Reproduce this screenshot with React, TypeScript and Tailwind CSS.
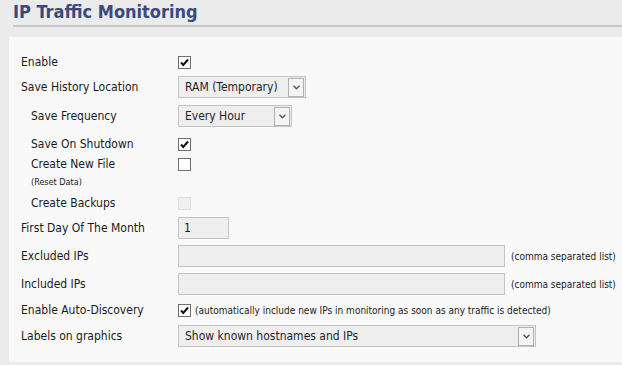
import { ReactNode } from 'react';

const font = { fontFamily: '"DejaVu Sans Condensed", "DejaVu Sans", sans-serif' };

function Check({ checked, disabled }: { checked?: boolean; disabled?: boolean }) {
  return (
    <span
      className={
        disabled
          ? 'flex h-[13px] w-[13px] shrink-0 items-center justify-center border border-[#dcdcdc] bg-[#f0f0f0]'
          : 'flex h-[13px] w-[13px] shrink-0 items-center justify-center border border-[#707070] bg-white'
      }
    >
      {checked && (
        <svg width="9" height="9" viewBox="0 0 9 9">
          <path d="M1 4.5 L3.3 7 L8 1.5" fill="none" stroke="#111" strokeWidth="2" />
        </svg>
      )}
    </span>
  );
}

function Select({ value, width }: { value: string; width: string }) {
  return (
    <div
      className={`flex h-[22px] items-center justify-between border border-[#c4c4c4] bg-[#eeeeee] pl-[6px] pr-[1px] text-[12px] text-[#1e1e2e] ${width}`}
    >
      <span>{value}</span>
      <span className="flex h-[19px] w-[16px] items-center justify-center border border-[#b0b0b0] bg-[#f4f4f4]">
        <svg width="7" height="5" viewBox="0 0 7 5">
          <path d="M0.5 0.8 L3.5 3.8 L6.5 0.8" fill="none" stroke="#555" strokeWidth="1.4" />
        </svg>
      </span>
    </div>
  );
}

function Row({
  label,
  indent,
  h,
  children,
}: {
  label: ReactNode;
  indent?: boolean;
  h: string;
  children?: ReactNode;
}) {
  return (
    <div className={`flex items-center ${h}`}>
      <div className={`w-[157px] shrink-0 text-[12px] text-[#1a1a1a] ${indent ? 'pl-[10px]' : ''}`}>{label}</div>
      <div className="flex items-center whitespace-nowrap">{children}</div>
    </div>
  );
}

export default function App() {
  return (
    <div className="h-[365px] w-[622px] overflow-hidden bg-[#ebebeb]" style={font}>
      <div className="ml-[13px] border-b-2 border-[#c8c8c8] pb-[3px] pt-[1px]">
        <h1 className="text-[18px] font-bold leading-[21px] text-[#3b4a7c]">IP Traffic Monitoring</h1>
      </div>
      <div className="ml-[9px] mt-[10px] bg-[#f9f9f9] pb-[14px] pl-[12px] pt-[13px]">
        <Row label="Enable" h="h-[24px]">
          <Check checked />
        </Row>
        <Row label="Save History Location" h="h-[26px]">
          <Select value="RAM (Temporary)" width="w-[128px]" />
        </Row>
        <Row label="Save Frequency" indent h="h-[32px]">
          <Select value="Every Hour" width="w-[114px]" />
        </Row>
        <Row label="Save On Shutdown" indent h="h-[24px]">
          <Check checked />
        </Row>
        <Row label="Create New File" indent h="h-[16px]">
          <Check />
        </Row>
        <div className="mt-[4px] flex h-[14px] items-center pl-[10px] text-[9px] text-[#1a1a1a]">(Reset Data)</div>
        <Row label="Create Backups" indent h="h-[26px]">
          <Check disabled />
        </Row>
        <Row label="First Day Of The Month" h="h-[24px]">
          <div className="flex h-[22px] w-[51px] items-center border border-[#c4c4c4] bg-[#eeeeee] pl-[5px] text-[12px] text-[#1a1a1a]">
            1
          </div>
        </Row>
        <Row label="Excluded IPs" h="h-[32px]">
          <div className="h-[22px] w-[327px] border border-[#c4c4c4] bg-[#eeeeee]" />
          <span className="ml-[6px] text-[10px] text-[#1a1a1a]">(comma separated list)</span>
        </Row>
        <Row label="Included IPs" h="h-[24px]">
          <div className="h-[22px] w-[327px] border border-[#c4c4c4] bg-[#eeeeee]" />
          <span className="ml-[6px] text-[10px] text-[#1a1a1a]">(comma separated list)</span>
        </Row>
        <Row label="Enable Auto-Discovery" h="h-[28px]">
          <Check checked />
          <span className="ml-[4px] text-[10px] text-[#1a1a1a]">
            (automatically include new IPs in monitoring as soon as any traffic is detected)
          </span>
        </Row>
        <Row label="Labels on graphics" h="h-[24px]">
          <Select value="Show known hostnames and IPs" width="w-[358px]" />
        </Row>
      </div>
    </div>
  );
}
